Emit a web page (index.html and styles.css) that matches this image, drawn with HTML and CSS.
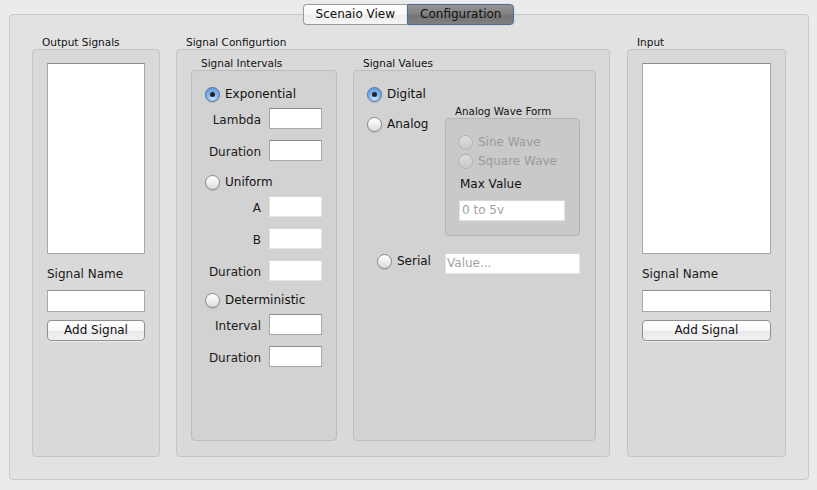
FILE: index.html
```html
<!DOCTYPE html>
<html>
<head>
<meta charset="utf-8">
<link rel="stylesheet" href="styles.css">
</head>
<body>
<div class="tabs">
  <div class="tab">Scenaio View</div>
  <div class="tab sel">Configuration</div>
</div>
<div class="pane">
  <div class="col col-out">
    <div class="glabel">Output Signals</div>
    <div class="gbox side">
      <div class="list"></div>
      <div class="fname">Signal Name</div>
      <div class="field name"></div>
      <div class="btn">Add Signal</div>
    </div>
  </div>
  <div class="col col-cfg">
    <div class="glabel">Signal Configurtion</div>
    <div class="gbox cfg">
      <div class="sub sub-int">
        <div class="glabel">Signal Intervals</div>
        <div class="ibox intervals">
          <div class="opt"><span class="radio on"></span><span>Exponential</span></div>
          <div class="frow first"><span class="flab">Lambda</span><span class="field"></span></div>
          <div class="frow"><span class="flab">Duration</span><span class="field"></span></div>
          <div class="opt o-uni"><span class="radio"></span><span>Uniform</span></div>
          <div class="frow first"><span class="flab">A</span><span class="field dim"></span></div>
          <div class="frow"><span class="flab">B</span><span class="field dim"></span></div>
          <div class="frow"><span class="flab">Duration</span><span class="field dim"></span></div>
          <div class="opt o-det"><span class="radio"></span><span>Deterministic</span></div>
          <div class="frow first"><span class="flab">Interval</span><span class="field"></span></div>
          <div class="frow"><span class="flab">Duration</span><span class="field"></span></div>
        </div>
      </div>
      <div class="sub sub-val">
        <div class="glabel">Signal Values</div>
        <div class="ibox values">
          <div class="vtop">
            <div class="vleft">
              <div class="opt"><span class="radio on"></span><span>Digital</span></div>
              <div class="opt o-analog"><span class="radio"></span><span>Analog</span></div>
            </div>
            <div class="wave">
              <div class="glabel wlabel">Analog Wave Form</div>
              <div class="wbox">
                <div class="opt dis"><span class="radio"></span><span>Sine Wave</span></div>
                <div class="opt dis o-sq"><span class="radio"></span><span>Square Wave</span></div>
                <div class="maxv">Max Value</div>
                <div class="field dim maxf"><span class="ph">0 to 5v</span></div>
              </div>
            </div>
          </div>
          <div class="serial">
            <div class="opt o-serial"><span class="radio"></span><span>Serial</span></div>
            <div class="field dim serf"><span class="ph">Value...</span></div>
          </div>
        </div>
      </div>
    </div>
  </div>
  <div class="col col-in">
    <div class="glabel">Input</div>
    <div class="gbox side">
      <div class="list"></div>
      <div class="fname">Signal Name</div>
      <div class="field name"></div>
      <div class="btn">Add Signal</div>
    </div>
  </div>
</div>
</body>
</html>
```

FILE: styles.css
```css
html, body {
  margin: 0;
  padding: 0;
}
body {
  background: #ebebeb;
  font-family: "DejaVu Sans", "Liberation Sans", sans-serif;
  font-size: 12px;
  color: #1a1a1a;
  width: 817px;
  height: 490px;
  overflow: hidden;
}

/* tabs */
.tabs {
  display: flex;
  justify-content: center;
  margin-top: 4px;
  height: 21px;
  margin-bottom: -11px;
  position: relative;
  z-index: 1;
}
.tab {
  height: 21px;
  box-sizing: border-box;
  padding: 0 12px;
  line-height: 19px;
  border: 1px solid #9a9a9a;
  background: linear-gradient(#ffffff, #f6f6f6 50%, #ececec 51%, #f5f5f5);
  color: #111;
  white-space: nowrap;
}
.tab:first-child {
  border-radius: 4px 0 0 4px;
  border-right: none;
}
.tab.sel {
  border-radius: 0 4px 4px 0;
  background: linear-gradient(#969696, #7f7f7f 50%, #737373 51%, #808080);
  border-color: #4f6c92;
  box-shadow: 0 0 1px #7f9cc4;
}

/* main pane */
.pane {
  margin: 0 8px 0 9px;
  height: 466px;
  box-sizing: border-box;
  background: #e2e2e2;
  border: 1px solid #c9c9c9;
  border-radius: 4px;
  padding: 20px 22px 22px 22px;
  display: flex;
  gap: 16px;
}
.col {
  display: flex;
  flex-direction: column;
}
.col-out { width: 128px; }
.col-cfg { width: 434px; }
.col-in { width: 159px; margin-left: 1px; }

.glabel {
  font-size: 10.5px;
  line-height: 14px;
  height: 14px;
  padding-left: 10px;
  white-space: nowrap;
  color: #111;
}
.gbox {
  flex: 1;
  background: #d9d9d9;
  border: 1px solid #c4c4c4;
  border-radius: 4px;
  box-sizing: border-box;
}

/* side columns */
.side {
  padding: 13px 14px 0 14px;
  display: flex;
  flex-direction: column;
}
.list {
  height: 191px;
  background: #fff;
  border: 1px solid #a8a8a8;
  border-top-color: #8c8c8c;
  box-sizing: border-box;
}
.fname {
  margin-top: 12px;
  line-height: 16px;
  white-space: nowrap;
}
.field {
  display: block;
  background: #fff;
  border: 1px solid #a9a9a9;
  border-top-color: #8d8d8d;
  box-sizing: border-box;
  height: 21px;
  width: 53px;
  flex: none;
}
.field.dim {
  border-color: #e4e4e4;
  border-top-color: #d6d6d6;
}
.name {
  margin-top: 8px;
  height: 22px;
  width: auto;
}
.btn {
  margin-top: 8px;
  height: 21px;
  box-sizing: border-box;
  border: 1px solid #8f8f8f;
  border-radius: 4px;
  background: linear-gradient(#ffffff, #f7f7f7 50%, #e9e9e9 51%, #f1f1f1);
  text-align: center;
  line-height: 19px;
  color: #111;
  box-shadow: 0 1px 0 rgba(255,255,255,0.5);
}

/* config */
.cfg {
  padding: 6px 13px 15px 14px;
  display: flex;
  gap: 16px;
}
.sub {
  display: flex;
  flex-direction: column;
}
.sub-int { width: 146px; }
.sub-val { width: 243px; }
.ibox {
  flex: 1;
  background: #d2d2d2;
  border: 1px solid #bdbdbd;
  border-radius: 4px;
  box-sizing: border-box;
}

/* radio */
.opt {
  display: flex;
  align-items: center;
  height: 16px;
  line-height: 16px;
  gap: 5px;
  white-space: nowrap;
  color: #111;
}
.radio {
  width: 15px;
  height: 15px;
  box-sizing: border-box;
  border-radius: 50%;
  border: 1px solid #8a8a8a;
  background: linear-gradient(#ffffff, #f1f1f1 45%, #dadada);
  box-shadow: 0 1px 1px rgba(0,0,0,0.12);
  display: flex;
  align-items: center;
  justify-content: center;
  flex: none;
}
.radio.on {
  border-color: #4d73a4;
  background: radial-gradient(circle at 50% 80%, #c9e2fb, #7fb2ea 50%, #5b94d8);
}
.radio.on::after {
  content: "";
  width: 5px;
  height: 5px;
  border-radius: 50%;
  background: #1d2330;
}
.opt.dis { color: #9b9b9b; }
.opt.dis .radio {
  border-color: #b1b1b1;
  background: linear-gradient(#dedede, #d3d3d3 50%, #c8c8c8);
  box-shadow: none;
}

/* intervals */
.intervals {
  padding: 15px 14px 0 13px;
  display: flex;
  flex-direction: column;
}
.frow {
  display: flex;
  justify-content: flex-end;
  align-items: center;
  gap: 8px;
  height: 21px;
  margin-top: 11px;
}
.frow.first { margin-top: 7px; }
.intervals .opt + .frow.first { margin-top: 6px; }
.flab {
  padding-top: 2px;
  line-height: 16px;
  white-space: nowrap;
}
.o-uni { margin-top: 13px; }
.o-det { margin-top: 11px; }
.o-uni + .frow.first, .o-det + .frow.first { margin-top: 7px; }

/* values */
.values {
  padding: 15px 0 0 13px;
}
.vtop {
  display: flex;
}
.vleft { width: 78px; }
.o-analog { margin-top: 14px; }
.wave {
  margin-top: 18px;
  width: 135px;
}
.wlabel {
  font-size: 10.3px;
}
.wbox {
  height: 118px;
  box-sizing: border-box;
  background: #c9c9c9;
  border: 1px solid #b4b4b4;
  border-radius: 4px;
  padding: 15px 12px 0 12px;
}
.o-sq { margin-top: 3px; }
.maxv {
  margin-top: 7px;
  padding-left: 2px;
  line-height: 16px;
  color: #111;
}
.maxf {
  margin-top: 8px;
  margin-left: 1px;
  width: 106px;
}
.ph {
  color: #a2a2a2;
  line-height: 19px;
  padding-left: 2px;
  white-space: nowrap;
}
.serial {
  margin-top: 17px;
  padding-left: 10px;
  display: flex;
  align-items: flex-start;
}
.o-serial { width: 68px; }
.serf { width: 135px; }
.serf .ph { padding-left: 1px; }
```
